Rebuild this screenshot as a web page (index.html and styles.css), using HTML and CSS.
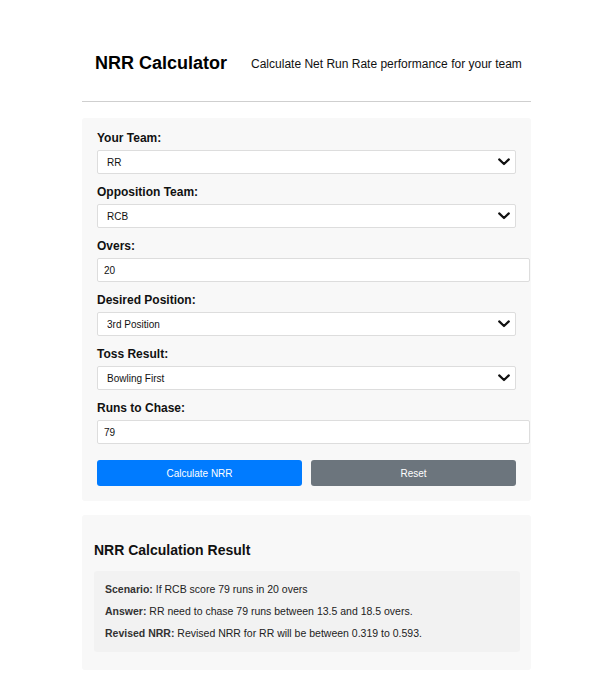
FILE: index.html
```html
<!DOCTYPE html>
<html lang="en">
<head>
<meta charset="utf-8">
<title>NRR Calculator</title>
<link rel="stylesheet" href="styles.css">
</head>
<body>
<div class="container">
  <header class="header">
    <h1 class="title">NRR Calculator</h1>
    <p class="subtitle">Calculate Net Run Rate performance for your team</p>
  </header>

  <form class="card form-card">
    <div class="field">
      <label class="label">Your Team:</label>
      <div class="select-wrap">
        <select class="control select"><option>RR</option></select>
        <svg class="chev" width="12" height="8" viewBox="0 0 12 8"><path d="M1.2 1.4 L6 6 L10.8 1.4" fill="none" stroke="#111" stroke-width="2.2" stroke-linecap="round" stroke-linejoin="round"/></svg>
      </div>
    </div>
    <div class="field">
      <label class="label">Opposition Team:</label>
      <div class="select-wrap">
        <select class="control select"><option>RCB</option></select>
        <svg class="chev" width="12" height="8" viewBox="0 0 12 8"><path d="M1.2 1.4 L6 6 L10.8 1.4" fill="none" stroke="#111" stroke-width="2.2" stroke-linecap="round" stroke-linejoin="round"/></svg>
      </div>
    </div>
    <div class="field">
      <label class="label">Overs:</label>
      <input class="control input" type="text" value="20">
    </div>
    <div class="field">
      <label class="label">Desired Position:</label>
      <div class="select-wrap">
        <select class="control select"><option>3rd Position</option></select>
        <svg class="chev" width="12" height="8" viewBox="0 0 12 8"><path d="M1.2 1.4 L6 6 L10.8 1.4" fill="none" stroke="#111" stroke-width="2.2" stroke-linecap="round" stroke-linejoin="round"/></svg>
      </div>
    </div>
    <div class="field">
      <label class="label">Toss Result:</label>
      <div class="select-wrap">
        <select class="control select"><option>Bowling First</option></select>
        <svg class="chev" width="12" height="8" viewBox="0 0 12 8"><path d="M1.2 1.4 L6 6 L10.8 1.4" fill="none" stroke="#111" stroke-width="2.2" stroke-linecap="round" stroke-linejoin="round"/></svg>
      </div>
    </div>
    <div class="field">
      <label class="label">Runs to Chase:</label>
      <input class="control input" type="text" value="79">
    </div>
    <div class="buttons">
      <button type="button" class="btn btn-primary">Calculate NRR</button>
      <button type="button" class="btn btn-secondary">Reset</button>
    </div>
  </form>

  <section class="card result-card">
    <h3 class="result-title">NRR Calculation Result</h3>
    <div class="result-box">
      <p class="result-line"><strong>Scenario:</strong> If RCB score 79 runs in 20 overs</p>
      <p class="result-line"><strong>Answer:</strong> RR need to chase 79 runs between 13.5 and 18.5 overs.</p>
      <p class="result-line"><strong>Revised NRR:</strong> Revised NRR for RR will be between 0.319 to 0.593.</p>
    </div>
  </section>
</div>
</body>
</html>
```

FILE: styles.css
```css
* { font-family: "Liberation Sans", Arial, sans-serif; }
body { margin: 0; background: #fff; color: #000; }
.container { width: 449px; margin-left: 82px; }

.header {
  display: flex;
  align-items: center;
  gap: 24px;
  padding: 52px 13px 26px;
  border-bottom: 1px solid #cfcfcf;
}
.title { margin: 0; font-size: 18px; line-height: 23px; font-weight: bold; color: #000; white-space: nowrap; flex-shrink: 0; }
.subtitle { margin: 0; font-size: 12px; line-height: 16px; color: #111; padding-top: 1px; white-space: nowrap; }

.card { background: #f8f8f8; border-radius: 3px; }
.form-card { margin-top: 16px; padding: 12px 15px 15px; }

.field { margin-bottom: 10px; }
.label { display: block; font-size: 12px; line-height: 16px; font-weight: bold; color: #111; margin-bottom: 4px; }

.control {
  font-size: 10px;
  color: #111;
  background: #fff;
  border: 1px solid #ddd;
  border-radius: 2px;
  height: 24px;
  margin: 0;
  outline: none;
}
.input { width: 100%; box-sizing: content-box; height: 22px; padding: 0 6px; }
.select-wrap { position: relative; }
.select { width: 100%; box-sizing: border-box; padding: 0 6px 0 9px; appearance: none; -webkit-appearance: none; }
.chev { position: absolute; right: 6px; top: 8px; pointer-events: none; }

.buttons { display: flex; gap: 9px; margin-top: 16px; }
.btn {
  flex: 1;
  height: 26px;
  border: none;
  border-radius: 3px;
  color: #fff;
  font-size: 10px;
  padding: 0;
}
.btn-primary { background: #007bff; }
.btn-secondary { background: #6c757d; }

.result-card { margin-top: 14px; padding: 12px 11px 18px 12px; }
.result-title { margin: 14px 0 12px; font-size: 14px; line-height: 18px; font-weight: bold; color: #111; }
.result-box { background: #f2f2f2; border-radius: 3px; padding: 11px 11px 12px; }
.result-line { margin: 0 0 8px; font-size: 10.5px; line-height: 14px; color: #222; }
.result-line:last-child { margin-bottom: 0; }
.result-line strong { color: #333; font-weight: bold; }
```
